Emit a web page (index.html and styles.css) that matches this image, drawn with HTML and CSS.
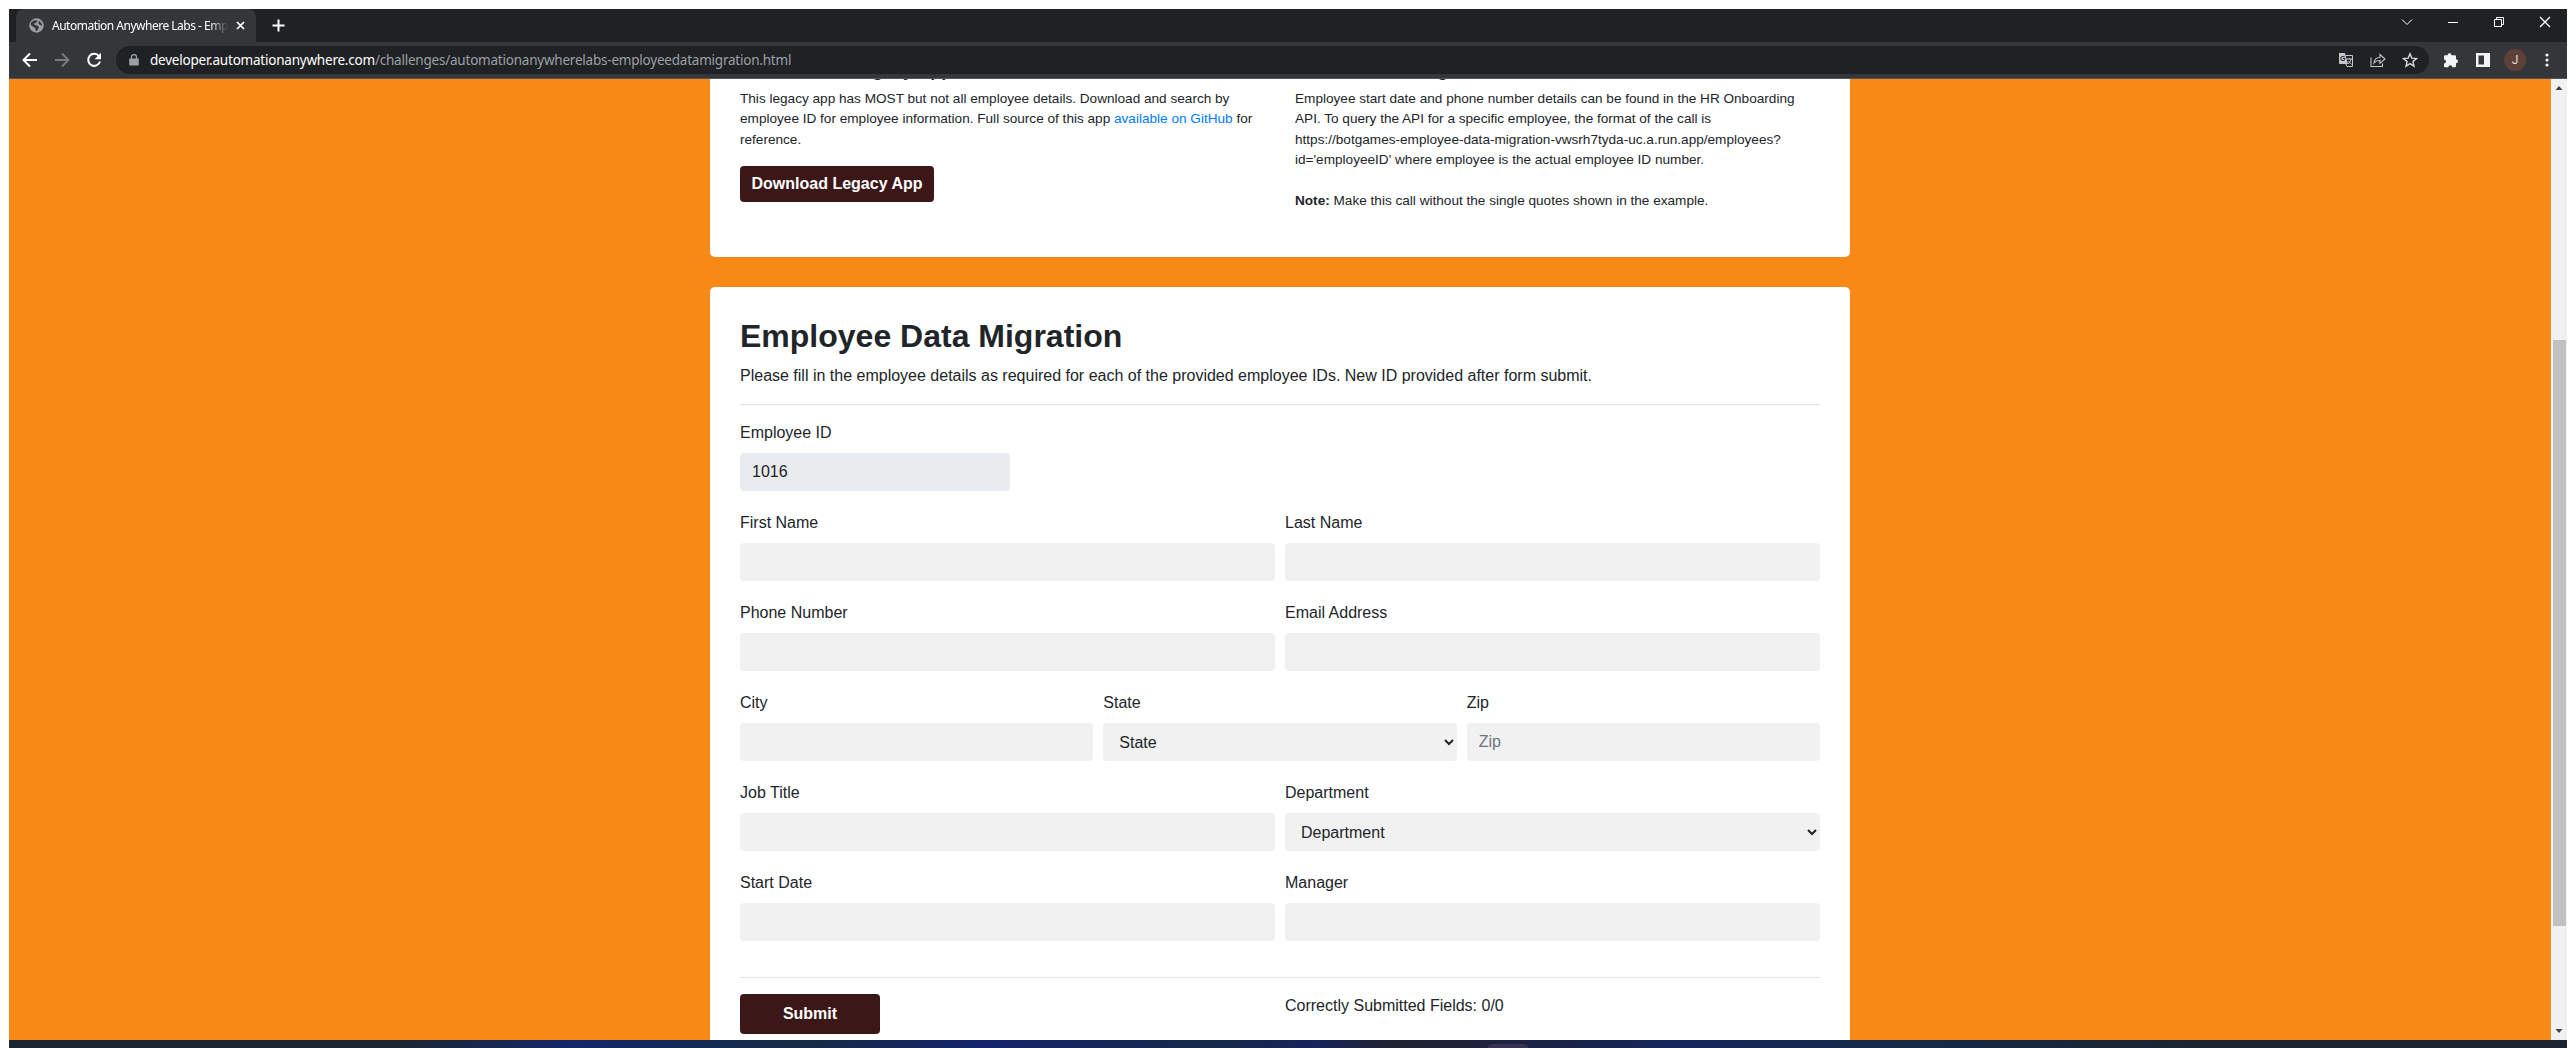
FILE: index.html
```html
<!DOCTYPE html>
<html lang="en">
<head>
<meta charset="utf-8">
<title>Automation Anywhere Labs - Employee Data Migration</title>
<link rel="stylesheet" href="styles.css">
</head>
<body>
<div class="window">
  <header class="tabstrip">
    <div class="tab">
      <svg class="globe" width="15" height="15" viewBox="0 0 15 15"><circle cx="7.5" cy="7.5" r="7.2" fill="#9aa0a6"/><path d="M2 4.5 5 2.2l3.5.3-.8 2-2.4.8.4 1.7 3 .6 1.3 2-1.8 3.2-1.6.2-.2-2.7L3.800 8.500 1.800 7zM10 2.800l2.600 2.700.300 2.500-2.200-1.200-1.500-1.500z" fill="#35363a"/></svg>
      <span class="tab-title">Automation Anywhere Labs - Emp</span>
      <svg class="tab-close" width="9" height="9" viewBox="0 0 9 9"><path d="M1 1l7 7M8 1L1 8" stroke="#fff" stroke-width="1.7"/></svg>
    </div>
    <svg class="newtab" width="13" height="13" viewBox="0 0 13 13"><path d="M6.500 .5v12M.5 6.500h12" stroke="#fff" stroke-width="2"/></svg>
    <div class="controls">
      <svg width="12" height="12" viewBox="0 0 12 12"><path d="M1 3.500l5 5 5-5" fill="none" stroke="#fff"/></svg>
      <svg width="12" height="12" viewBox="0 0 12 12"><path d="M1 6.500h10" stroke="#fff"/></svg>
      <svg width="12" height="12" viewBox="0 0 12 12"><path d="M1.500 3.500h7v7h-7zM3.500 3.500v-2h7v7h-2" fill="none" stroke="#fff"/></svg>
      <svg width="12" height="12" viewBox="0 0 12 12"><path d="M1 1l10 10M11 1L1 11" stroke="#fff" stroke-width="1.300"/></svg>
    </div>
  </header>
  <div class="toolbar">
    <div class="nav">
      <svg width="16" height="16" viewBox="0 0 16 16"><path d="M15 8H2M8 1.500L1.500 8 8 14.500" fill="none" stroke="#fff" stroke-width="2"/></svg>
      <svg width="16" height="16" viewBox="0 0 16 16"><path d="M1 8h13M8 1.500L14.500 8 8 14.500" fill="none" stroke="#7b7c7f" stroke-width="1.800"/></svg>
      <svg width="16" height="16" viewBox="0 0 16 16"><path d="M13 4.200A6 6 0 1 0 14 9.500" fill="none" stroke="#fff" stroke-width="2"/><path d="M15 .8v6.400H8.600z" fill="#fff"/></svg>
    </div>
    <div class="omnibox">
      <svg width="10" height="12" viewBox="0 0 10 12"><path d="M1 4.500h8q.8 0 .8.800v5.400q0 .8-.8.800H1q-.8 0-.8-.8V5.300q0-.8.800-.8z" fill="#9aa0a6"/><path d="M2.500 5V3a2.500 2.500 0 0 1 5 0v2" fill="none" stroke="#9aa0a6" stroke-width="1.300"/></svg>
      <span class="url"><span class="host">developer.automationanywhere.com</span><span class="path">/challenges/automationanywherelabs-employeedatamigration.html</span></span>
      <div class="page-actions">
        <svg width="16" height="16" viewBox="0 0 16 16"><path d="M1 1h6l3 11H2q-1 0-1-1z" fill="#c4c6c9"/><path d="M8 3.500h6.500v11H9L7.800 12" fill="none" stroke="#c4c6c9"/><path d="M9 7h5M11.500 6v1M13 7q-.5 3-3 5M10.500 9l3 3.500" fill="none" stroke="#c4c6c9"/><text x="2" y="9.200" class="gmark">G</text></svg>
        <svg width="16" height="16" viewBox="0 0 16 16"><path d="M1 5.500v9h11.500v-3M4 11q.5-5.500 6-5.500v-3L15 7l-5 4.300V8.500Q6 8.300 4 11z" fill="none" stroke="#c4c6c9" stroke-width="1.100"/></svg>
        <svg width="16" height="16" viewBox="0 0 16 16"><path d="M8 1.800l1.800 4.300 4.700.4-3.600 3.100 1.100 4.600L8 11.700l-4 2.500 1.100-4.600-3.600-3.100 4.700-.4z" fill="none" stroke="#d5d7da" stroke-width="1.400"/></svg>
      </div>
    </div>
    <div class="extras">
      <svg width="16" height="16" viewBox="0 0 16 16"><path d="M4.500 3.200a2 2 0 0 1 4 0H12q1 0 1 1v3a2 2 0 0 1 0 4v3q0 1-1 1H9.300a2 2 0 0 0-4 0H2q-1 0-1-1v-2.700a2 2 0 0 0 0-4V4.200q0-1 1-1z" fill="#f1f3f4"/></svg>
      <svg width="16" height="16" viewBox="0 0 16 16"><path d="M1 1h14v14H1zM3.500 3.500v9H9v-9z" fill="#f1f3f4" fill-rule="evenodd"/></svg>
      <span class="avatar">J</span>
      <svg width="4" height="14" viewBox="0 0 4 14"><circle cx="2" cy="2" r="1.600" fill="#f1f3f4"/><circle cx="2" cy="7" r="1.600" fill="#f1f3f4"/><circle cx="2" cy="12" r="1.600" fill="#f1f3f4"/></svg>
    </div>
  </div>
  <div class="viewport">
    <main class="page">
      <section class="card downloads">
        <div>
          <h2>1. Download Legacy App</h2>
          <p>This legacy app has MOST but not all employee details. Download and search by<br>employee ID for employee information. Full source of this app <a>available on GitHub</a> for<br>reference.</p>
          <button class="btn download">Download Legacy App</button>
        </div>
        <div>
          <h2>2. HR Onboarding API</h2>
          <p>Employee start date and phone number details can be found in the HR Onboarding<br>API. To query the API for a specific employee, the format of the call is<br>https://botgames-employee-data-migration-vwsrh7tyda-uc.a.run.app/employees?<br>id='employeeID' where employee is the actual employee ID number.</p>
          <p class="note"><b>Note:</b> Make this call without the single quotes shown in the example.</p>
        </div>
      </section>
      <section class="card form">
        <h1>Employee Data Migration</h1>
        <p class="lead">Please fill in the employee details as required for each of the provided employee IDs. New ID provided after form submit.</p>
        <div class="fields">
          <div class="row"><label class="field id">Employee ID<input value="1016" readonly></label></div>
          <div class="row"><label class="field">First Name<input></label><label class="field">Last Name<input></label></div>
          <div class="row"><label class="field">Phone Number<input></label><label class="field">Email Address<input></label></div>
          <div class="row"><label class="field">City<input></label><label class="field">State<select><option>State</option></select></label><label class="field">Zip<input placeholder="Zip"></label></div>
          <div class="row"><label class="field">Job Title<input></label><label class="field">Department<select><option>Department</option></select></label></div>
          <div class="row"><label class="field">Start Date<input></label><label class="field">Manager<input></label></div>
        </div>
        <div class="row actions"><div><button class="btn submit">Submit</button></div><div>Correctly Submitted Fields: 0/0</div></div>
      </section>
    </main>
    <div class="scrollbar">
      <svg width="15" height="17" viewBox="0 0 15 17"><path d="M4.500 11h7L8 7z" fill="#404040"/></svg>
      <div class="thumb"></div>
      <svg width="15" height="17" viewBox="0 0 15 17"><path d="M4.500 6h7L8 10z" fill="#404040"/></svg>
    </div>
  </div>
</div>
<footer class="taskbar"><span class="task"></span></footer>
</body>
</html>
```
FILE: styles.css
```css
* { box-sizing: border-box; }
body { margin: 0; padding: 9px 9px 0; width: 2576px; height: 1048px; overflow: hidden; background: #fff; color: #212529; font: 16px/24px "Liberation Sans", Arial, sans-serif; }
svg { display: block; flex: none; }
.window { height: 1031px; display: flex; flex-direction: column; }
.tabstrip { height: 33px; flex: none; display: flex; align-items: center; background: #202124; padding: 0 16px 0 7px; font: 12px "Noto Sans", sans-serif; color: #fff; }
.tab { width: 240px; height: 33px; display: flex; align-items: center; background: #35363a; border-radius: 8px 8px 0 0; padding: 0 11px 1px 13px; }
.tab-title { flex: none; width: 178px; margin-left: 8px; white-space: nowrap; overflow: hidden; letter-spacing: -.5px; -webkit-mask-image: linear-gradient(90deg, #000 158px, transparent 176px); }
.tab-close { margin-left: 6px; }
.newtab { margin-left: 16px; }
.controls { margin-left: auto; display: flex; gap: 34px; padding-bottom: 7px; }
.toolbar { height: 37px; flex: none; display: flex; align-items: center; background: #35363a; border-bottom: 1px solid #50575c; padding: 0 18px 0 13px; }
.nav { display: flex; gap: 16px; width: 94px; }
.omnibox { flex: 1; height: 28px; border-radius: 14px; background: #202124; display: flex; align-items: center; padding: 0 11px 0 13px; }
.url { margin-left: 11px; font: 13.5px/20px "Noto Sans", sans-serif; letter-spacing: -.22px; white-space: nowrap; color: #9aa0a6; }
.host { color: #fff; }
.page-actions { margin-left: auto; display: flex; gap: 16px; }
.gmark { font: bold 7px "Liberation Sans", sans-serif; fill: #202124; }
.extras { display: flex; align-items: center; gap: 16px; margin-left: 14px; }
.extras .avatar { width: 22px; height: 22px; margin: 0 3px 0 -3px; border-radius: 50%; background: #5d4037; color: #e8dedb; font: 12px/22px Roboto, sans-serif; text-align: center; }
.viewport { height: 961px; display: flex; background: #f78a16; overflow: hidden; }
.page { flex: 1; overflow: hidden; padding-left: 701px; }
.card { width: 1140px; background: #fff; padding: 0 30px; }
.downloads { height: 178px; border-radius: 0 0 5px 5px; display: grid; grid-template-columns: 555px 1fr; }
.downloads h2 { margin: -21px 0 7px; font-size: 18px; line-height: 24px; white-space: nowrap; }
.downloads p { margin: 0; font-size: 13.6px; line-height: 20.4px; white-space: nowrap; }
.downloads .note { margin-top: 20.4px; }
a { color: #007bff; }
.btn { display: block; border: 0; border-radius: 4px; background: #3b1717; color: #fff; font: bold 16px/24px "Liberation Sans", Arial, sans-serif; padding: 0; }
.download { width: 194px; height: 36px; margin-top: 16px; }
.form { margin-top: 30px; height: 800px; border-radius: 5px 5px 0 0; padding-top: 30px; }
h1 { margin: 0 0 8px; font-size: 32px; line-height: 38px; }
.lead { margin: 0; height: 42px; padding-top: 1px; border-bottom: 1px solid #e2e2e2; }
.fields { margin-top: 16px; padding-bottom: 36px; border-bottom: 1px solid #e2e2e2; display: grid; gap: 20px; }
.row { display: flex; gap: 10px; }
.row > * { flex: 1; }
.field { display: flex; flex-direction: column; gap: 8px; }
.row > .id { flex: 0 0 270px; }
input, select { width: 100%; height: 38px; border: 0; border-radius: 4px; background: #f1f1f1; color: #212529; font: inherit; padding: 0 12px; }
select { padding-right: 0; }
input::placeholder { color: #6c757d; }
.id input { background: #e9ecef; }
.actions { margin-top: 16px; }
.submit { width: 140px; height: 40px; }
.scrollbar { width: 16px; background: #f1f1f1; display: flex; flex-direction: column; }
.thumb { width: 13px; height: 586px; margin: 244px 0 auto 2px; background: #c1c1c1; }
.taskbar { height: 8px; background: linear-gradient(90deg, #1b2630 0 15%, #13276a 22%, #142c43 31%, #12236b 38%, #142947 47%, #17235b 51%, #202330 54%, #1c2240 59%, #14265c 65%, #132a49 73%, #1b2430 86%); }
.task { display: block; width: 40px; height: 4px; margin: 0 0 0 1479px; border-radius: 4px 4px 0 0; background: #34324f; transform: translateY(4px); }
```
